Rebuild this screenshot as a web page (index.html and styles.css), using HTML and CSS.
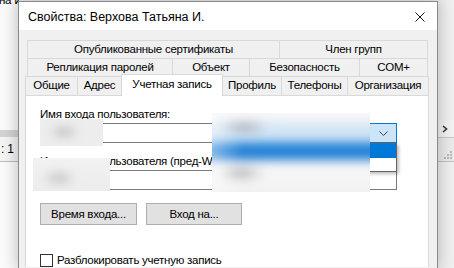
FILE: index.html
```html
<!DOCTYPE html>
<html>
<head>
	<meta charset="utf-8">
	<link rel="stylesheet" href="styles.css">
</head>
<body>

	<div class="backwin left">
		<div class="back-title">на И.</div>
		<div class="back-band"></div>
		<div class="back-cell">: 1</div>
	</div>

	<div class="backwin right">
		<div class="side-top">
			<svg class="side-arrow" width="6" height="8" viewBox="0 0 6 8"><polyline points="1,1 4.5,4 1,7" fill="none" stroke="#333" stroke-width="1.6"/></svg>
		</div>
		<div class="side-grip">
			<svg width="10" height="8" viewBox="0 0 10 8">
				<rect x="7" y="0" width="2" height="2" fill="#b8b8b8"/>
				<rect x="4" y="3" width="2" height="2" fill="#b8b8b8"/>
				<rect x="7" y="3" width="2" height="2" fill="#b8b8b8"/>
				<rect x="1" y="6" width="2" height="2" fill="#b8b8b8"/>
				<rect x="4" y="6" width="2" height="2" fill="#b8b8b8"/>
				<rect x="7" y="6" width="2" height="2" fill="#b8b8b8"/>
			</svg>
		</div>
	</div>

	<div class="dialog">
		<div class="titlebar">
			<span class="title">Свойства: Верхова Татьяна И.</span>
			<svg class="close" width="10" height="10" viewBox="0 0 10 10"><path d="M0.5,0.5 L9.5,9.5 M9.5,0.5 L0.5,9.5" stroke="#111" stroke-width="1"/></svg>
		</div>

		<div class="face">
			<div class="tabrow">
				<div class="tab" style="width:252px">Опубликованные сертификаты</div>
				<div class="tab last" style="width:149px">Член групп</div>
			</div>
			<div class="tabrow">
				<div class="tab" style="width:145px">Репликация паролей</div>
				<div class="tab" style="width:77px">Объект</div>
				<div class="tab" style="width:110px">Безопасность</div>
				<div class="tab last" style="width:69px">COM+</div>
			</div>
			<div class="tabrow front">
				<div class="tab" style="width:52px">Общие</div>
				<div class="tab" style="width:44px">Адрес</div>
				<div class="tab selected" style="width:102px">Учетная запись</div>
				<div class="tab after-sel" style="width:58px">Профиль</div>
				<div class="tab" style="width:66px">Телефоны</div>
				<div class="tab last" style="width:82px">Организация</div>
			</div>

			<div class="panel">
				<div class="label">Имя входа пользователя:</div>
				<div class="fields">
					<div class="input first"></div>
					<div class="combo">
						<div class="combo-btn">
							<svg width="9" height="5" viewBox="0 0 9 5"><polyline points="0.5,0.5 4.5,4.5 8.5,0.5" fill="none" stroke="#444" stroke-width="1"/></svg>
						</div>
					</div>
				</div>

				<div class="label second">Имя входа пользователя (пред-Windows 2000):</div>
				<div class="fields">
					<div class="input first"></div>
					<div class="input wide"></div>
				</div>

				<div class="buttons">
					<div class="btn">Время входа...</div>
					<div class="btn">Вход на...</div>
				</div>

				<div class="check">
					<span class="box"></span>
					<span>Разблокировать учетную запись</span>
				</div>

				<div class="droplist">
					<div class="item active"></div>
					<div class="item"></div>
				</div>

				<div class="patch patch-a"><div class="smear"></div></div>
				<div class="patch patch-b"><div class="smear"></div></div>
				<div class="patch patch-c"><div class="smear"></div></div>
			</div>
		</div>
	</div>

</body>
</html>
```

FILE: styles.css
```css
body {
	margin: 0;
	padding: 0;
	width: 454px;
	height: 268px;
	overflow: hidden;
	position: relative;
	background: #f0f0f0;
	font-family: "Liberation Sans", Arial, sans-serif;
	font-size: 11.5px;
	letter-spacing: -0.25px;
	color: #000;
}

/* windows behind the dialog */

.backwin {
	position: absolute;
	top: 0;
	height: 268px;
}

.backwin.left {
	left: 0;
	width: 19px;
	background: #fbfbfb;
	overflow: hidden;
}

.back-title {
	margin-top: -6px;
	margin-left: -1px;
	white-space: nowrap;
	line-height: 12px;
}

.back-band {
	margin-top: 124px;
	height: 7px;
	background: #d3d3d3;
}

.back-cell {
	height: 24px;
	line-height: 24px;
	padding-left: 1px;
	background: #f4f4f4;
	border-bottom: 1px solid #bdbdbd;
	white-space: nowrap;
	font-size: 12px;
}

.backwin.right {
	left: 438px;
	width: 16px;
	background: #f0f0f0;
}

.side-top {
	margin-top: 120px;
	height: 17px;
	border-bottom: 1px solid #c9c9c9;
	display: flex;
	align-items: flex-start;
	padding-left: 4px;
	background: #f3f3f3;
}

.side-arrow {
	margin-top: 5px;
}

.side-grip {
	height: 24px;
	background: #ebebeb;
	border-bottom: 1px solid #c2c2c2;
	display: flex;
	align-items: flex-end;
	justify-content: flex-end;
	padding-right: 1px;
	padding-bottom: 2px;
	box-sizing: border-box;
}

/* dialog */

.dialog {
	position: absolute;
	left: 18px;
	top: 1px;
	width: 420px;
	height: 267px;
	box-sizing: border-box;
	border: 1px solid #8a8a8a;
	border-bottom: none;
	background: #f0f0f0;
	box-shadow: 0 0 14px 2px rgba(0, 0, 0, 0.22);
}

.titlebar {
	height: 28px;
	background: #fff;
	display: flex;
	align-items: center;
	justify-content: space-between;
	padding: 0 12px 0 9px;
}

.title {
	font-size: 12.5px;
	letter-spacing: 0;
	margin-top: 1px;
}

.close {
	margin-top: 1px;
}

.face {
	padding-top: 10px;
}

.tabrow {
	display: flex;
	margin-left: 8px;
	height: 18px;
}

.tabrow.front {
	margin-left: 6px;
	height: 19px;
	align-items: flex-start;
}

.tab {
	box-sizing: border-box;
	height: 100%;
	border-top: 1px solid #d9d9d9;
	border-left: 1px solid #d9d9d9;
	background: #f0f0f0;
	text-align: center;
	line-height: 17px;
	white-space: nowrap;
	flex: none;
}

.tab.last {
	border-right: 1px solid #d9d9d9;
}

.tab.after-sel {
	border-left: none;
}

.tab.selected {
	position: relative;
	z-index: 1;
	height: 22px;
	margin-top: -2px;
	background: #fff;
	border-right: 1px solid #d9d9d9;
	line-height: 18px;
}

.panel {
	position: relative;
	margin-left: 6px;
	width: 404px;
	height: 172px;
	box-sizing: border-box;
	border: 1px solid #d9d9d9;
	border-bottom: none;
	background: #fff;
	padding: 11px 0 0 14px;
}

.label {
	line-height: 15px;
	white-space: nowrap;
}

.label.second {
	margin-top: 11px;
}

.fields {
	display: flex;
	margin-top: 1px;
}

.input {
	box-sizing: border-box;
	height: 20px;
	border: 1px solid #7a7a7a;
	background: #fff;
}

.input.first {
	width: 172px;
	border-right: none;
}

.input.wide {
	width: 185px;
}

.combo {
	box-sizing: border-box;
	width: 185px;
	height: 20px;
	border: 1px solid #0078d7;
	background: #cce4f7;
	display: flex;
	justify-content: flex-end;
}

.combo-btn {
	width: 26px;
	display: flex;
	align-items: center;
	justify-content: center;
}

.buttons {
	display: flex;
	gap: 9px;
	margin-top: 13px;
}

.btn {
	box-sizing: border-box;
	width: 97px;
	height: 22px;
	border: 1px solid #adadad;
	background: #e1e1e1;
	text-align: center;
	line-height: 20px;
}

.btn + .btn {
	width: 96px;
}

.check {
	display: flex;
	align-items: center;
	gap: 4px;
	margin-top: 28px;
	line-height: 14px;
}

.check .box {
	box-sizing: border-box;
	width: 13px;
	height: 13px;
	border: 1px solid #333;
	background: #fff;
}

/* open dropdown of the suffix combo */

.droplist {
	position: absolute;
	left: 186px;
	top: 47px;
	width: 185px;
	height: 29px;
	box-sizing: border-box;
	border: 1px solid #646464;
	background: #fff;
	box-shadow: 2px 2px 3px rgba(0, 0, 0, 0.25);
}

.droplist .item {
	height: 13px;
}

.droplist .item.active {
	height: 14px;
	background: #0078d7;
}

/* redacted areas */

.patch {
	position: absolute;
	overflow: hidden;
}

.smear {
	position: absolute;
	inset: -10px;
	filter: blur(4px);
}

.patch-a {
	left: 14px;
	top: 23px;
	width: 63px;
	height: 27px;
}

.patch-a .smear {
	background:
		radial-gradient(ellipse 16px 8px at 34px 23px, #bdbdbd, rgba(200,200,200,0) ),
		#ededed;
}

.patch-c {
	left: 7px;
	top: 62px;
	width: 77px;
	height: 33px;
}

.patch-c .smear {
	background:
		radial-gradient(ellipse 18px 9px at 36px 30px, #c2c2c2, rgba(200,200,200,0)),
		linear-gradient(#f3f3f3, #ebebeb);
}

.patch-b {
	left: 186px;
	top: 17px;
	width: 158px;
	height: 79px;
}

.patch-b .smear {
	filter: blur(5px);
	background:
		radial-gradient(ellipse 26px 8px at 42px 24px, rgba(150,150,150,0.7), rgba(150,150,150,0)),
		radial-gradient(ellipse 24px 9px at 40px 70px, rgba(150,150,150,0.7), rgba(150,150,150,0)),
		linear-gradient(90deg, rgba(255,255,255,0.55), rgba(255,255,255,0) 40px),
		linear-gradient(#f7f7f7 0, #f7f7f7 16px, #d4e6f6 22px, #cfe3f5 36px, #2c87d8 42px, #1c7bd4 54px, #f4f4f4 60px, #f6f6f6 74px, #eeeeee 99px);
}
```
